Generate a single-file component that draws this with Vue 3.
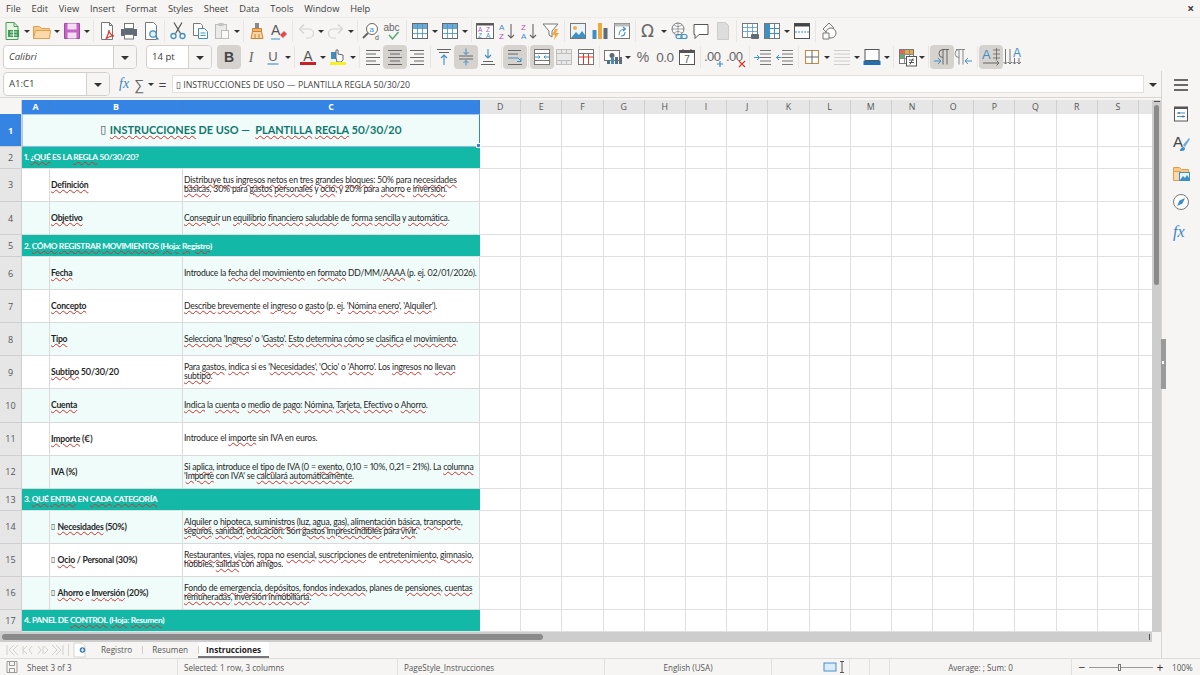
<template>
  <div class="app">
    <div class="menubar">
      <span v-for="m in menus" :key="m">{{ m }}</span>
      <span class="close-doc">×</span>
    </div>

    <div class="toolbar tb1">
      <template v-for="(it, i) in row1" :key="i">
        <i v-if="it === 's'" class="sep"></i>
        <i v-else-if="it === 'd'" class="drop"></i>
        <svg v-else class="btn" viewBox="0 0 22 22" v-html="icons[it]"></svg>
      </template>
    </div>

    <div class="toolbar tb2">
      <div class="combo font-box"><span class="combo-val italic">Calibri</span><b class="combo-arrow"></b></div>
      <div class="combo size-box"><span class="combo-val">14 pt</span><b class="combo-arrow"></b></div>
      <template v-for="(it, i) in row2" :key="i">
        <i v-if="it === 's'" class="sep"></i>
        <i v-else-if="it === 'd'" class="drop"></i>
        <svg v-else class="btn" :class="{ on: active.includes(it) }" viewBox="0 0 22 22" v-html="icons[it]"></svg>
      </template>
    </div>

    <div class="workspace">
      <div class="doc">
        <div class="formulabar">
          <div class="combo name-box"><span class="combo-val">A1:C1</span><b class="combo-arrow"></b></div>
          <span class="fx">fx</span>
          <span class="sigma">∑</span>
          <i class="drop small"></i>
          <span class="equal">=</span>
          <div class="formula-input">▯ INSTRUCCIONES DE USO — PLANTILLA REGLA 50/30/20</div>
          <i class="drop formula-drop"></i>
        </div>

        <div class="main">
          <div class="sheet-wrap">
            <div class="sheet-view">
              <div class="sheet">
                <div class="grid-row col-head">
                  <div class="corner"></div>
                  <div v-for="c in columns" :key="c" class="col-cell" :class="{ sel: selected.includes(c) }">{{ c }}</div>
                </div>

                <div v-for="row in rows" :key="row.n" class="grid-row" :style="{ height: row.h + 'px' }">
                  <div class="row-num" :class="{ sel: row.n === 1 }">{{ row.n }}</div>

                  <div v-if="row.type === 'title'" class="merged title-cell">
                    <span class="tofu">▯</span>
                    <template v-for="(p, k) in parse(row.text)" :key="k"><span :class="{ wavy: p.bad }">{{ p.t }}</span></template>
                    <span class="sel-handle"></span>
                  </div>
                  <div v-else-if="row.type === 'section'" class="merged section-cell">
                    <template v-for="(p, k) in parse(row.text)" :key="k"><span :class="{ wavy: p.bad }">{{ p.t }}</span></template>
                  </div>
                  <template v-else>
                    <div class="cell" :class="{ tint: row.tint }"></div>
                    <div class="cell label" :class="{ tint: row.tint }">
                      <span v-if="row.tofu" class="tofu small">▯ </span>
                      <template v-for="(p, k) in parse(row.label)" :key="k"><span :class="{ wavy: p.bad }">{{ p.t }}</span></template>
                    </div>
                    <div class="cell desc" :class="{ tint: row.tint }">
                      <div>
                        <template v-for="(p, k) in parse(row.text)" :key="k"><span :class="{ wavy: p.bad }">{{ p.t }}</span></template>
                      </div>
                    </div>
                  </template>

                  <div v-for="c in emptyCols" :key="c" class="empty"></div>
                </div>
              </div>
            </div>
            <div class="hscroll"><div class="hthumb"></div><i class="hmark"></i></div>
          </div>

          <div class="vscroll"><i class="vmark"></i><div class="vthumb"></div></div>
        </div>

        <div class="tabbar">
          <svg class="tab-nav" viewBox="0 0 60 14" width="60" height="14">
            <g fill="none" stroke="#d2d0cc" stroke-width="1">
              <path d="M2 2v10M9 2 4 7l5 5M13 2 8 7l5 5" />
              <path d="M22 3l-4 4 4 4M18 3v8M27 3l-3 4 3 4" />
              <path d="M33 3l3 4-3 4M38 3v8M39 3l4 4-4 4" />
              <path d="M47 2l5 5-5 5M51 2l5 5-5 5M58 2v10" />
            </g>
          </svg>
          <i class="tab-line"></i>
          <svg class="add-sheet" viewBox="0 0 16 16" width="16" height="16">
            <path d="M2 1h8l3 3v11H2z" fill="#fff" stroke="#d5d3cf" />
            <circle cx="10.5" cy="8" r="2.8" fill="#3a7fc4" />
            <path d="M9 8h3M10.5 6.5v3" stroke="#fff" stroke-width="1" />
          </svg>
          <span v-for="(t, i) in tabs" :key="t" class="tab" :class="{ current: i === 2 }">{{ t }}</span>
        </div>
      </div>

      <div class="sidebar">
        <svg v-for="s in sideIcons" :key="s" class="side-icon" viewBox="0 0 22 22" v-html="icons[s]"></svg>
        <div class="side-handle"><i></i></div>
      </div>
    </div>

    <div class="statusbar">
      <svg class="st-save" viewBox="0 0 14 14" width="14" height="14">
        <path d="M2 1.5h10v11H2zM4.5 1.5v4h5v-4M4.5 12.5v-4h5v4" fill="none" stroke="#9a9996" />
      </svg>
      <span class="st st-sheet">Sheet 3 of 3</span>
      <span class="st st-sel">Selected: 1 row, 3 columns</span>
      <span class="st st-page">PageStyle_Instrucciones</span>
      <span class="st st-lang">English (USA)</span>
      <span class="st st-mode">
        <svg viewBox="0 0 24 14" width="24" height="14">
          <rect x="1" y="3" width="12" height="8" fill="#d9ecf9" stroke="#4a90c8" />
          <path d="M17 1.5h4M19 1.5v11M17 12.5h4" fill="none" stroke="#555" />
        </svg>
      </span>
      <span class="st st-b1"></span>
      <span class="st st-b2"></span>
      <span class="st st-sum">Average: ; Sum: 0</span>
      <span class="st-zoom">
        <b class="zoom-btn">−</b>
        <span class="zoom-track"><i></i></span>
        <b class="zoom-btn">+</b>
      </span>
      <span class="st-pct">100%</span>
    </div>
  </div>
</template>

<script setup>
const menus = ['File', 'Edit', 'View', 'Insert', 'Format', 'Styles', 'Sheet', 'Data', 'Tools', 'Window', 'Help']
const tabs = ['Registro', 'Resumen', 'Instrucciones']

const columns = ['A', 'B', 'C', 'D', 'E', 'F', 'G', 'H', 'I', 'J', 'K', 'L', 'M', 'N', 'O', 'P', 'Q', 'R', 'S', '']
const selected = ['A', 'B', 'C']
const emptyCols = columns.slice(3)

// ~word~ marks what the spell checker underlines
const parse = (str) => str.split('~').map((t, i) => ({ t, bad: i % 2 === 1 }))

const rows = [
  { n: 1, h: 33, type: 'title', text: ' ~INSTRUCCIONES~ DE USO —  ~PLANTILLA~ ~REGLA~ 50/30/20' },
  { n: 2, h: 21.9, type: 'section', text: '1. ~¿QUÉ~ ES LA ~REGLA~ 50/30/20?' },
  { n: 3, h: 33.2, label: '~Definición~', text: '~Distribuye~ ~tus~ ~ingresos~ ~netos~ en ~tres~ ~grandes~ ~bloques~: 50% para ~necesidades~\n~básicas~, 30% para ~gastos~ ~personales~ y ~ocio~, y 20% para ~ahorro~ e ~inversión~.' },
  { n: 4, h: 33.1, tint: true, label: '~Objetivo~', text: '~Conseguir~ un ~equilibrio~ ~financiero~ ~saludable~ de ~forma~ ~sencilla~ y ~automática~.' },
  { n: 5, h: 21.9, type: 'section', text: '2. ~CÓMO~ ~REGISTRAR~ ~MOVIMIENTOS~ (~Hoja~: ~Registro~)' },
  { n: 6, h: 33.1, tint: true, label: '~Fecha~', text: 'Introduce la ~fecha~ ~del~ ~movimiento~ en ~formato~ DD/MM/~AAAA~ (p. ~ej~. 02/01/2026).' },
  { n: 7, h: 33.1, label: '~Concepto~', text: '~Describe~ ~brevemente~ el ~ingreso~ o ~gasto~ (p. ~ej~. \'~Nómina~ ~enero~\', \'~Alquiler~\').' },
  { n: 8, h: 33.1, tint: true, label: '~Tipo~', text: '~Selecciona~ \'~Ingreso~\' o \'~Gasto~\'. ~Esto~ ~determina~ ~cómo~ se ~clasifica~ el ~movimiento~.' },
  { n: 9, h: 33.1, label: '~Subtipo~ 50/30/20', text: 'Para ~gastos~, ~indica~ si es \'~Necesidades~\', \'~Ocio~\' o \'~Ahorro~\'. Los ~ingresos~ no ~llevan~\n~subtipo~.' },
  { n: 10, h: 33.1, tint: true, label: '~Cuenta~', text: '~Indica~ la ~cuenta~ o ~medio~ de ~pago~: ~Nómina~, ~Tarjeta~, ~Efectivo~ o ~Ahorro~.' },
  { n: 11, h: 33.1, label: '~Importe~ (€)', text: 'Introduce el ~importe~ sin IVA en euros.' },
  { n: 12, h: 33.1, tint: true, label: 'IVA (%)', text: 'Si ~aplica~, introduce el ~tipo~ de IVA (0 = ~exento~, 0,10 = 10%, 0,21 = 21%). La ~columna~\n\'~Importe~ con IVA\' se ~calculará~ ~automáticamente~.' },
  { n: 13, h: 21.9, type: 'section', text: '3. ~QUÉ~ ~ENTRA~ EN ~CADA~ ~CATEGORÍA~' },
  { n: 14, h: 33.1, tint: true, tofu: true, label: '~Necesidades~ (50%)', text: '~Alquiler~ o ~hipoteca~, ~suministros~ (~luz~, ~agua~, ~gas~), ~alimentación~ ~básica~, ~transporte~,\n~seguros~, ~sanidad~, ~educación~. Son ~gastos~ ~imprescindibles~ para ~vivir~.' },
  { n: 15, h: 33.1, tofu: true, label: '~Ocio~ / Personal (30%)', text: '~Restaurantes~, ~viajes~, ~ropa~ no ~esencial~, ~suscripciones~ de ~entretenimiento~, ~gimnasio~,\nhobbies, ~salidas~ con amigos.' },
  { n: 16, h: 33.1, tint: true, tofu: true, label: '~Ahorro~ e ~Inversión~ (20%)', text: '~Fondo~ de ~emergencia~, ~depósitos~, ~fondos~ ~indexados~, planes de ~pensiones~, ~cuentas~\n~remuneradas~, ~inversión~ ~inmobiliaria~.' },
  { n: 17, h: 21.9, type: 'section', text: '4. PANEL DE ~CONTROL~ (~Hoja~: ~Resumen~)' }
]

const row1 = ['new', 'd', 'open', 'd', 'save', 'd', 's', 'pdf', 'print', 'preview', 's', 'cut', 'copy', 'paste', 'd', 's', 'clone', 'clear', 's', 'undo', 'd', 'redo', 'd', 's', 'find', 'spell', 's', 'rows', 'd', 'cols', 'd', 's', 'sort', 'asc', 'desc', 'filter', 's', 'image', 'chart', 'pivot', 's', 'omega', 'd', 'link', 'comment', 'header', 's', 'freeze', 'split', 'd', 'window', 's', 'shapes']
const row2 = ['bold', 'italic', 'under', 'd', 's', 'color', 'd', 'high', 'd', 's', 'left', 'center', 'right', 's', 'top', 'mid', 'bottom', 's', 'wrap', 's', 'merge', 'unmerge', 'split2', 's', 'money', 'd', 'pct', 'num', 'date', 's', 'adddec', 'deldec', 's', 'indent', 'outdent', 's', 'border', 'd', 'bstyle', 'd', 'bcolor', 'd', 's', 'cond', 'd', 's', 'ltr', 'rtl', 's', 'horiz', 'vert']
const active = ['bold', 'center', 'mid', 'wrap', 'merge', 'ltr', 'horiz']
const sideIcons = ['menu', 'props', 'styles', 'gallery', 'nav', 'fxs']

const lines = (ys, x1, x2, c = '#666') => ys.map((y, i) => `<path d="M${x1} ${y}H${Array.isArray(x2) ? x2[i] : x2}" stroke="${c}" fill="none"/>`).join('')
const tableIcon = (c) => `<rect x="3.5" y="3.5" width="15" height="15" fill="#fff" stroke="#666"/><rect x="4" y="4" width="14" height="4" fill="${c}" opacity=".75"/><path d="M3.5 8.5h15M3.5 13.5h15M8.5 3.5v15M13.5 3.5v15" stroke="#3d8fc6" fill="none" opacity=".8"/>`
const textRows = [4.5, 8, 11.5, 15, 18.5]

const icons = {
  new: '<path d="M5 2.5h8l4 4v13H5z" fill="#e8f5e3" stroke="#4d9a5c"/><path d="M13 2.5v4h4" fill="none" stroke="#4d9a5c"/><rect x="7" y="10" width="11" height="7" fill="#3f9d58"/><path d="M9 12h7M9 15h7M12.5 10v7" stroke="#fff" stroke-width=".8"/>',
  open: '<path d="M2.5 6.5h6l2 2h8v10h-16z" fill="#f8c98a" stroke="#e0a050"/><path d="M2.5 18.5l2-8h15l-1 8z" fill="#fbd9a8" stroke="#e0a050"/>',
  save: '<path d="M3.5 3.5h15v15h-15z" fill="#c464c4" stroke="#a34ba3"/><rect x="6.5" y="3.5" width="9" height="6" fill="#f3ddf3"/><rect x="6.5" y="12.5" width="9" height="6" fill="#f3ddf3"/>',
  pdf: '<path d="M5.5 2.5h8l3 3v14h-11z" fill="#fff" stroke="#777"/><path d="M13.5 2.5v3h3" fill="none" stroke="#777"/><path d="M10 19c2-4 3-7 3-9 0 3 2 5 5 6-3 0-6 1-8 3z" fill="none" stroke="#d8362a" stroke-width="1.2"/>',
  print: '<rect x="6.5" y="3.5" width="9" height="5" fill="#fff" stroke="#777"/><path d="M3 9h16v7H3z" fill="#5f6b76"/><rect x="6.5" y="14.5" width="9" height="4.5" fill="#fff" stroke="#777"/>',
  preview: '<path d="M5.5 2.5h8l3 3v14h-11z" fill="#fff" stroke="#777"/><circle cx="13" cy="14" r="3.2" fill="#e4f1fa" stroke="#3d8fc6" stroke-width="1.2"/><path d="M15.5 16.5l3 3" stroke="#3d8fc6" stroke-width="1.5"/>',
  cut: '<path d="M7 2.5l6.5 11M15 2.5L8.5 13.5" stroke="#555" stroke-width="1.2" fill="none"/><circle cx="6.5" cy="16" r="2.5" fill="none" stroke="#3d8fc6" stroke-width="1.3"/><circle cx="15.5" cy="16" r="2.5" fill="none" stroke="#3d8fc6" stroke-width="1.3"/>',
  copy: '<path d="M4.5 3.5h7l2 2v10h-9z" fill="#fff" stroke="#777"/><path d="M9.5 8.5h6l3 3v7h-9z" fill="#fff" stroke="#3d8fc6"/><path d="M11.5 13h5M11.5 15.5h5" stroke="#3d8fc6"/>',
  paste: '<g opacity=".45"><rect x="4.5" y="4.5" width="11" height="14" fill="#ddd" stroke="#777"/><rect x="7.5" y="3" width="5" height="3" fill="#888"/><rect x="10.5" y="10.5" width="7" height="8" fill="#fff" stroke="#777"/></g>',
  clone: '<path d="M9 3h4v5H9z" fill="#888"/><path d="M6.5 8.5h9v3h-9z" fill="#f3b56a" stroke="#c78335"/><path d="M6.5 11.5h9l1.5 7H5z" fill="#fad6a4" stroke="#c78335"/><path d="M9 14v4M13 14v4" stroke="#c78335"/>',
  clear: '<text x="3" y="15" font-size="14" font-family="Liberation Sans" fill="#555">A</text><path d="M12 15l4-4 3 3-4 4z" fill="#e34a4a"/><path d="M3 19h9" stroke="#3d8fc6"/>',
  undo: '<g fill="none" stroke="#d4d3d0" stroke-width="1.2"><path d="M5 9h9a4 4 0 0 1 0 9h-3"/><path d="M9 4.5 4.5 9 9 13.5"/></g>',
  redo: '<g fill="none" stroke="#d4d3d0" stroke-width="1.2"><path d="M17 9H8a4 4 0 0 0 0 9h3"/><path d="M13 4.5 17.5 9 13 13.5"/></g>',
  find: '<circle cx="12" cy="9" r="5.5" fill="#fff" stroke="#666"/><path d="M8 13l-5 5" stroke="#666" stroke-width="2"/><text x="9.6" y="11.5" font-size="8" font-family="Liberation Sans" fill="#3d8fc6">a</text><text x="15" y="20" font-size="7" font-family="Liberation Sans" fill="#555">d</text>',
  spell: '<text x="1.5" y="11" font-size="10" font-family="Liberation Sans" fill="#666">abc</text><path d="M7 15l3.5 4 6-7" fill="none" stroke="#4aa96c" stroke-width="1.4"/>',
  rows: tableIcon('#3d8fc6'),
  cols: tableIcon('#3d8fc6'),
  sort: '<rect x="2.5" y="3.5" width="17" height="15" fill="#fff" stroke="#666"/><rect x="3" y="3.5" width="16" height="2" fill="#555"/><text x="4" y="11.5" font-size="6.5" font-family="Liberation Sans" fill="#b04fc0">A</text><text x="12" y="11.5" font-size="6.5" font-family="Liberation Sans" fill="#b04fc0">Z</text><text x="4" y="18" font-size="6.5" font-family="Liberation Sans" fill="#3d8fc6">Z</text><text x="12" y="18" font-size="6.5" font-family="Liberation Sans" fill="#3d8fc6">A</text>',
  asc: '<text x="3" y="10" font-size="8" font-family="Liberation Sans" fill="#3d8fc6">A</text><text x="3" y="19" font-size="8" font-family="Liberation Sans" fill="#b04fc0">Z</text><path d="M15 4v14M12 15l3 3 3-3" fill="none" stroke="#666" stroke-width="1.1"/>',
  desc: '<text x="3" y="10" font-size="8" font-family="Liberation Sans" fill="#b04fc0">Z</text><text x="3" y="19" font-size="8" font-family="Liberation Sans" fill="#3d8fc6">A</text><path d="M15 4v14M12 15l3 3 3-3" fill="none" stroke="#666" stroke-width="1.1"/>',
  filter: '<path d="M3 4h15l-6 7v6l-3-2v-4z" fill="#fff" stroke="#777"/><path d="M15 9l-3 6h3l-1 5 5-7h-3l2-4z" fill="#f2a93b"/>',
  image: '<rect x="3.5" y="3.5" width="15" height="15" fill="#eaf4fb" stroke="#777"/><circle cx="8" cy="8" r="2" fill="#f2b04a"/><path d="M4 18l5-6 3 3 3-4 3 4v3z" fill="#3d8fc6"/>',
  chart: '<rect x="3.5" y="10" width="4" height="9" fill="#3d8fc6"/><rect x="9" y="3" width="4" height="16" fill="#f2a93b"/><rect x="14.5" y="8" width="4" height="11" fill="#5f6b76"/>',
  pivot: '<rect x="3.5" y="3.5" width="15" height="15" fill="#fff" stroke="#777"/><rect x="3.5" y="3.5" width="15" height="3" fill="#bbb"/><path d="M8 15c0-4 3-6 6-6M12 7l2.5 2-2.5 2M14 12c0 3-2 4-4 4" fill="none" stroke="#3d8fc6" stroke-width="1.1"/>',
  omega: '<text x="3" y="17" font-size="17" font-family="DejaVu Sans" fill="#666">Ω</text>',
  link: '<circle cx="10" cy="9" r="6" fill="#fff" stroke="#777"/><path d="M4 9h12M10 3v12M6 5c3 2 5 2 8 0M6 13c3-2 5-2 8 0" fill="none" stroke="#777" stroke-width=".7"/><rect x="8" y="14.5" width="6" height="4" rx="2" fill="none" stroke="#3d8fc6" stroke-width="1.2"/><rect x="13" y="14.5" width="6" height="4" rx="2" fill="none" stroke="#3d8fc6" stroke-width="1.2"/>',
  comment: '<path d="M4 4.5h14v10H9l-4 4v-4H4z" fill="#fff" stroke="#555"/>',
  header: '<path d="M5.5 2.5h8l3 3v14h-11z" fill="#ddd" stroke="#ccc"/>',
  freeze: '<rect x="3.5" y="3.5" width="15" height="14" fill="#fff" stroke="#777"/><path d="M3.5 7.5h15M3.5 11.5h15M8.5 3.5v14M13.5 3.5v14" stroke="#3d8fc6" fill="none" opacity=".7"/><rect x="12" y="14" width="8" height="5" rx="1" fill="#5f6b76"/>',
  split: '<rect x="3.5" y="3.5" width="15" height="15" fill="#fff" stroke="#777"/><rect x="4" y="4" width="5" height="14" fill="#3d8fc6"/><path d="M3.5 8.5h15M3.5 13.5h15M13.5 3.5v15" stroke="#3d8fc6" fill="none"/>',
  window: '<rect x="3.5" y="3.5" width="15" height="15" fill="#fff" stroke="#555"/><rect x="3.5" y="3.5" width="15" height="3" fill="#444"/><path d="M4 12h14" stroke="#3d8fc6" stroke-dasharray="2 1"/>',
  shapes: '<path d="M5 9l6-6 5 5-6 6z" fill="none" stroke="#777"/><circle cx="13" cy="13" r="5" fill="#fff" stroke="#777"/><path d="M5 13h6v6H5z" fill="#fff" stroke="#777"/>',

  bold: '<text x="11" y="16" text-anchor="middle" font-size="14" font-weight="700" font-family="Liberation Sans" fill="#444">B</text>',
  italic: '<text x="11" y="16" text-anchor="middle" font-size="14" font-style="italic" font-family="Liberation Serif" fill="#666">I</text>',
  under: '<text x="11" y="15" text-anchor="middle" font-size="13" font-family="Liberation Sans" fill="#666">U</text><path d="M5.5 18h11" stroke="#6aa9d8" stroke-width="1.5"/>',
  color: '<text x="11" y="14.5" text-anchor="middle" font-size="14" font-family="Liberation Sans" fill="#555">A</text><rect x="3" y="16" width="16" height="3" fill="#c9212a"/>',
  high: '<path d="M4 6h7v7H4z" fill="#3d8fc6"/><path d="M9 12V4h2v4l5 1v5l-2 2h-4z" fill="#fff" stroke="#666"/><rect x="3" y="16" width="16" height="3" fill="#f7f029"/>',
  left: lines(textRows, 4, [18, 14, 18, 14, 18]),
  center: lines(textRows, 4, 18).replace('M4 8H18', 'M6 8H16').replace('M4 15H18', 'M6 15H16'),
  right: lines(textRows, 4, 18).replace('M4 8H18', 'M8 8H18').replace('M4 15H18', 'M8 15H18'),
  top: '<path d="M4 3.5h14M6 6.5h10" stroke="#666" fill="none"/><path d="M11 19V9M8 12l3-3 3 3" stroke="#3d8fc6" fill="none" stroke-width="1.1"/>',
  mid: '<path d="M4 10h14M4 13h14" stroke="#666" fill="none"/><path d="M11 2.5v6M8.5 6l2.5 2.5L13.5 6M11 19.5v-5M8.5 17l2.5-2.5 2.5 2.5" stroke="#3d8fc6" fill="none"/>',
  bottom: '<path d="M11 3v9M8 9l3 3 3-3" stroke="#3d8fc6" fill="none" stroke-width="1.1"/><path d="M6 15.5h10M4 18.5h14" stroke="#666" fill="none"/>',
  wrap: lines([4.5, 8, 18.5], 4, [17, 14, 18]) + '<path d="M4 12h10l3 3M13 15.5h4V12" stroke="#3d8fc6" fill="none"/>',
  merge: '<rect x="3.5" y="3.5" width="15" height="15" fill="#fff" stroke="#777"/><path d="M3.5 7.5h15M3.5 14.5h15" stroke="#777" fill="none"/><path d="M4 11h5l-1.5-1.5M18 11h-5l1.5-1.5M9 11l-1.5 1.5M13 11l1.5 1.5" stroke="#3d8fc6" fill="none"/>',
  unmerge: '<g opacity=".5"><rect x="3.5" y="3.5" width="15" height="15" fill="#ddd" stroke="#888"/><path d="M3.5 7.5h15M3.5 14.5h15M8.5 3.5v4M13.5 3.5v4M8.5 14.5v4M13.5 14.5v4" stroke="#888" fill="none"/></g>',
  split2: '<rect x="3.5" y="3.5" width="15" height="15" fill="#fff" stroke="#777"/><path d="M3.5 7.5h15" stroke="#777"/><path d="M8.5 7.5v11M13.5 7.5v11M3.5 11h15" stroke="#d8362a" fill="none"/>',
  money: '<rect x="2.5" y="4.5" width="15" height="10" fill="#fff" stroke="#777"/><circle cx="10" cy="9.5" r="2.5" fill="#5f6b76"/><rect x="9" y="12" width="3" height="6" fill="#3d8fc6"/><rect x="13" y="11" width="3" height="7" fill="#5f6b76"/><rect x="17" y="11" width="3" height="7" fill="#5f6b76"/><rect x="5" y="14" width="3" height="4" fill="#5f6b76"/>',
  pct: '<text x="11" y="16" text-anchor="middle" font-size="14" font-family="Liberation Sans" fill="#666">%</text>',
  num: '<text x="11" y="16" text-anchor="middle" font-size="13.5" font-family="Liberation Sans" fill="#666" letter-spacing="-.5">0.0</text>',
  date: '<rect x="3.5" y="4.5" width="15" height="14" fill="#fff" stroke="#555"/><rect x="3.5" y="4.5" width="15" height="2.5" fill="#555"/><path d="M7 3v3M15 3v3" stroke="#555"/><text x="11" y="17" text-anchor="middle" font-size="10" font-family="Liberation Sans" fill="#555">7</text>',
  adddec: '<text x="1" y="15" font-size="13" font-family="Liberation Sans" fill="#666" letter-spacing="-.5">.00</text><path d="M14 18h6M17 15v6" stroke="#3d8fc6" stroke-width="1.2"/>',
  deldec: '<text x="1" y="15" font-size="13" font-family="Liberation Sans" fill="#666" letter-spacing="-.5">.00</text><path d="M14 15l6 6M20 15l-6 6" stroke="#d8362a" stroke-width="1.2"/>',
  indent: lines(textRows, 8, 19, '#777') + '<path d="M2 11.5h5M5 9l2.5 2.5L5 14" stroke="#3d8fc6" fill="none"/>',
  outdent: lines(textRows, 8, 19, '#777') + '<path d="M7.5 11.5h-5M5 9l-2.5 2.5L5 14" stroke="#3d8fc6" fill="none"/>',
  border: '<rect x="4.5" y="4.5" width="13" height="13" fill="#fff" stroke="#c9883f"/><path d="M11 4.5v13M4.5 11h13" stroke="#666" fill="none"/>',
  bstyle: lines(textRows, 3, 19, '#cfcecb'),
  bcolor: '<rect x="4" y="3.5" width="14" height="11" fill="#fff" stroke="#555"/><rect x="2.5" y="15" width="17" height="4" fill="#1f6fb5"/>',
  cond: '<rect x="3.5" y="3.5" width="14" height="14" fill="#fff" stroke="#777"/><rect x="4" y="4" width="4.5" height="4" fill="#e06a5a"/><rect x="4" y="8.5" width="4.5" height="4" fill="#5bb36a"/><rect x="9" y="4" width="8" height="4" fill="#e0a94a"/><path d="M3.5 8.5h14M3.5 12.5h14M8.5 3.5v14M13.5 3.5v14" stroke="#888" fill="none"/><rect x="10.5" y="10.5" width="10" height="9.5" fill="#fff" stroke="#555"/><path d="M13 14h5M13 16.5h5M17 12.5l-3 6" stroke="#555" fill="none"/>',
  ltr: '<path d="M11 3.5h7M12 3.5v15M16 3.5v15M12 3.5a4 4 0 0 0 0 8" fill="none" stroke="#666"/><path d="M3 15h7M7 12l3 3-3 3" stroke="#3d8fc6" fill="none"/>',
  rtl: '<path d="M3 3.5h9M6 3.5v15M10 3.5v15M6 3.5a4 4 0 0 0 0 8" fill="none" stroke="#888"/><path d="M19 15h-7M15 12l-3 3 3 3" stroke="#3d8fc6" fill="none"/>',
  horiz: '<text x="2" y="13" font-size="13" font-family="Liberation Sans" fill="#3d8fc6">A</text><path d="M13 4h7M13 8h7M13 12h7M16.5 2v12" stroke="#666" fill="none" stroke-width=".8"/><path d="M3 17h16M16.5 14.5 19 17l-2.5 2.5" stroke="#666" fill="none"/>',
  vert: '<text x="11" y="11" font-size="12" font-family="Liberation Sans" fill="#3d8fc6">A</text><path d="M3.5 3v15M1.5 16l2 2 2-2M8 3v15M6 16l2 2 2-2M12.5 12v6M10.5 16l2 2 2-2M17 12v6M15 16l2 2 2-2" stroke="#666" fill="none" stroke-width=".9"/>',

  menu: '<path d="M4 6h14M4 11h14M4 16h14" stroke="#3b3b3b" stroke-width="1.5"/>',
  props: '<rect x="4.5" y="4" width="13" height="14" fill="#fff" stroke="#555"/><rect x="4.5" y="4" width="13" height="2" fill="#555"/><path d="M7 10h8M7 13.5h8" stroke="#3d8fc6"/><path d="M9 9v2M13 12.5v2" stroke="#555"/>',
  styles: '<text x="3" y="15" font-size="15" font-family="Liberation Sans" fill="#444">A</text><path d="M13 13l6-7 1 1-5 8z" fill="#6aa9d8"/><path d="M10 19c0-3 2-4 4-4l1 1c0 3-2 3-5 3z" fill="#3d8fc6"/>',
  gallery: '<path d="M3.5 5.5h6l2 2h7v4h-15z" fill="#f8c98a" stroke="#e0a050"/><path d="M3.5 9.5v9h7v-9z" fill="#fbd9a8" stroke="#e0a050"/><rect x="9.5" y="10.5" width="10" height="8" fill="#eaf4fb" stroke="#3d8fc6"/><path d="M10 18l3-4 2 2 2-3 2 3v2z" fill="#3d8fc6"/>',
  nav: '<circle cx="11" cy="11" r="7.5" fill="#fff" stroke="#777"/><path d="M15 7l-2.5 5.5L7 15l2.5-5.5z" fill="#3d8fc6"/>',
  fxs: '<text x="3" y="17" font-size="16" font-style="italic" font-family="Liberation Serif" fill="#3a85c4">fx</text>'
}
</script>

<style scoped>
.app {
  width: 1200px;
  height: 675px;
  background: #f6f5f4;
  display: flex;
  flex-direction: column;
  overflow: hidden;
  font-family: "Open Sans", "Noto Sans", sans-serif;
  color: #3d3d3d;
  font-size: 9.5px;
}

.menubar {
  height: 17px;
  display: flex;
  align-items: center;
  gap: 10.8px;
  padding: 0 6px;
  font-size: 9.3px;
  flex: none;
}

.close-doc {
  margin-left: auto;
  font-size: 12px;
  font-weight: 700;
}

.toolbar {
  display: flex;
  align-items: center;
  flex: none;
}

.tb1 {
  height: 26px;
  padding-left: 1px;
  border-top: 1px solid #ecebe9;
  box-sizing: border-box;
}

.tb2 {
  height: 28px;
  padding-left: 3px;
}

.btn {
  width: 22px;
  height: 22px;
  flex: none;
  border-radius: 3px;
  overflow: visible;
}

.btn.on {
  background: #d6d3cf;
  box-shadow: 0 0 0 1px #d6d3cf;
}

.sep {
  width: 5px;
  height: 22px;
  flex: none;
  position: relative;
}

.sep::after {
  content: "";
  position: absolute;
  left: 2px;
  top: 0;
  bottom: 0;
  width: 1px;
  background: #e8e6e3;
}

.drop {
  width: 8px;
  height: 22px;
  flex: none;
  position: relative;
}

.drop::after {
  content: "";
  position: absolute;
  left: 1px;
  top: 10px;
  border-left: 3px solid transparent;
  border-right: 3px solid transparent;
  border-top: 3px solid #333;
}

.combo {
  display: flex;
  align-items: stretch;
  background: #fff;
  border: 1px solid #d3d0cc;
  border-radius: 4px;
  box-sizing: border-box;
  height: 24px;
  flex: none;
  overflow: hidden;
}

.combo-val {
  flex: 1;
  padding-left: 5px;
  line-height: 22px;
  font-size: 9.6px;
}

.italic {
  font-style: italic;
}

.combo-arrow {
  width: 22px;
  background: #f6f5f4;
  border-left: 1px solid #d3d0cc;
  position: relative;
}

.combo-arrow::after {
  content: "";
  position: absolute;
  left: 7px;
  top: 10px;
  border-left: 4px solid transparent;
  border-right: 4px solid transparent;
  border-top: 4px solid #333;
}

.font-box {
  width: 134px;
}

.size-box {
  width: 66px;
  margin-left: 9px;
  margin-right: 6px;
}

.workspace {
  flex: 1;
  min-height: 0;
  display: flex;
}

.doc {
  width: 1161px;
  flex: none;
  display: flex;
  flex-direction: column;
}

.formulabar {
  height: 27px;
  display: flex;
  align-items: center;
  padding-left: 3px;
  padding-right: 2px;
  flex: none;
  border-bottom: 1px solid #d8d6d2;
  box-sizing: border-box;
}

.name-box {
  width: 107px;
}

.fx {
  margin-left: 9px;
  width: 14px;
  color: #3a85c4;
  font-family: "Liberation Serif", serif;
  font-style: italic;
  font-size: 14px;
}

.sigma {
  margin-left: 2px;
  width: 11px;
  font-size: 14px;
  color: #666;
}

.drop.small {
  margin-left: 1px;
}

.equal {
  width: 15px;
  font-size: 14px;
  text-align: center;
  color: #444;
}

.formula-input {
  flex: 1;
  margin-left: 2px;
  height: 18px;
  line-height: 18px;
  background: #fff;
  border: 1px solid #e2e0dd;
  box-sizing: border-box;
  padding-left: 3px;
  font-size: 8.8px;
  color: #444;
}

.formula-drop {
  margin-left: 3px;
  width: 12px;
}

.formula-drop::after {
  left: 2px;
  border-left-width: 4px;
  border-right-width: 4px;
  border-top-width: 4px;
}

.main {
  flex: 1;
  display: flex;
  min-height: 0;
}

.sheet-wrap {
  width: 1152px;
  flex: none;
  display: flex;
  flex-direction: column;
  padding-top: 2px;
  box-sizing: border-box;
}

.sheet-view {
  flex: 1;
  min-height: 0;
  overflow: hidden;
  background: #fff;
}

.sheet {
  width: 1200px;
}

.grid-row {
  display: grid;
  grid-template-columns: 22px 28px 133px 297px repeat(17, 41.2px);
  box-sizing: border-box;
}

.col-head {
  height: 14px;
}

.corner {
  background: #f6f5f4;
  border-right: 1px solid #cfcfcf;
}

.col-cell {
  background: #e6e6e6;
  border-right: 1px solid #cfcfcf;
  text-align: center;
  font-size: 8.8px;
  line-height: 14px;
  color: #555;
}

.col-cell.sel {
  background: #3584e4;
  color: #fff;
  font-weight: 700;
  border-right-color: #3a7fd6;
}

.row-num {
  background: #e6e6e6;
  border-bottom: 1px solid #cfcfcf;
  border-right: 1px solid #cfcfcf;
  display: flex;
  align-items: center;
  justify-content: center;
  font-size: 9px;
  color: #555;
  box-sizing: border-box;
}

.row-num.sel {
  background: #3584e4;
  color: #fff;
  font-weight: 700;
}

.merged {
  grid-column: span 3;
  display: flex;
  align-items: center;
  box-sizing: border-box;
  position: relative;
  font-family: Lato, "Open Sans", sans-serif;
  font-variant-numeric: proportional-nums;
  white-space: pre;
}

.title-cell {
  background: #effcfa;
  border: 1px solid #a9c9ee;
  border-right-color: #3584e4;
  border-bottom-color: #8fb8e8;
  justify-content: center;
  color: #0f766e;
  font-size: 10.9px;
  font-weight: 700;
  padding-bottom: 3px;
}

.section-cell {
  background: #14b8a6;
  color: #fff;
  font-size: 8.4px;
  letter-spacing: -0.36px;
  font-weight: 700;
  padding-left: 2px;
  border-bottom: 1px solid #d5e6e3;
}

.sel-handle {
  position: absolute;
  right: -2px;
  bottom: -2px;
  width: 3px;
  height: 3px;
  background: #3584e4;
  border: 1px solid #fff;
  z-index: 2;
}

.tofu {
  font-family: "DejaVu Sans", sans-serif;
  font-weight: 400;
  font-size: 11px;
  margin-right: 1px;
  color: #444;
}

.tofu.small {
  font-size: 8px;
  margin-right: 0;
}

.cell {
  background: #fff;
  border-right: 1px solid #dadada;
  border-bottom: 1px solid #dadada;
  box-sizing: border-box;
  display: flex;
  align-items: center;
  font-family: Lato, "Open Sans", sans-serif;
  font-variant-numeric: proportional-nums;
  color: #1f1f1f;
  overflow: hidden;
}

.cell.tint {
  background: #effcfa;
}

.label {
  font-size: 8.6px;
  font-weight: 700;
  letter-spacing: -0.2px;
  padding-left: 1px;
  white-space: pre;
}

.desc {
  font-size: 8.6px;
  letter-spacing: -0.22px;
  line-height: 9px;
  padding-left: 1px;
  white-space: pre;
}

.empty {
  background: #fff;
  border-right: 1px solid #dfdfdf;
  border-bottom: 1px solid #dfdfdf;
  box-sizing: border-box;
}

.wavy {
  text-decoration: underline wavy #d0312d 0.6px;
  text-underline-offset: 0.5px;
}

.hscroll {
  height: 10px;
  background: #cdcdcd;
  flex: none;
  position: relative;
  display: flex;
  align-items: center;
  padding-left: 2px;
}

.hthumb {
  width: 541px;
  height: 6px;
  background: #8a8a8a;
  border-radius: 3px;
}

.hmark {
  position: absolute;
  right: 2px;
  top: 2px;
  width: 1px;
  height: 6px;
  background: #555;
}

.vscroll {
  width: 9px;
  flex: none;
  background: #cdcdcd;
  margin-top: 2px;
  margin-bottom: 10px;
  position: relative;
  padding-top: 5px;
  box-sizing: border-box;
}

.vmark {
  position: absolute;
  left: 2px;
  top: 1px;
  width: 6px;
  height: 1px;
  background: #555;
}

.vthumb {
  width: 5px;
  height: 180px;
  margin-left: 2px;
  background: #8a8a8a;
  border-radius: 3px;
}

.sidebar {
  flex: 1;
  position: relative;
  display: flex;
  flex-direction: column;
  align-items: center;
  border-left: 1px solid #d8d6d2;
  padding-top: 3px;
  gap: 7.2px;
}

.side-icon {
  width: 22px;
  height: 22px;
  flex: none;
}

.side-handle {
  position: absolute;
  left: -1px;
  top: 268px;
  width: 5px;
  height: 50px;
  background: #9a9a9a;
}

.side-handle i {
  position: absolute;
  left: 1px;
  top: 22px;
  width: 2px;
  height: 3px;
  background: #fff;
}

.tabbar {
  height: 16px;
  display: flex;
  align-items: center;
  flex: none;
  padding-left: 5px;
  font-size: 8.2px;
}

.tab-nav {
  flex: none;
}

.tab-line {
  width: 1px;
  height: 12px;
  background: #d8d6d2;
  margin-left: 3px;
  flex: none;
}

.add-sheet {
  margin-left: 3px;
  flex: none;
}

.tab {
  padding: 0 10px;
  height: 16px;
  line-height: 15px;
  position: relative;
  color: #555;
}

.tab:first-of-type {
  margin-left: 3px;
}

.tab + .tab::before {
  content: "";
  position: absolute;
  left: 0;
  top: 4px;
  height: 8px;
  width: 1px;
  background: #d0cecb;
}

.tab.current {
  background: #fff;
  color: #222;
  font-weight: 700;
  border-bottom: 2px solid #77767b;
  box-sizing: border-box;
  padding: 0 8px;
}

.statusbar {
  height: 17px;
  display: flex;
  align-items: center;
  flex: none;
  font-size: 8.1px;
  color: #555;
  padding-left: 5px;
  border-top: 1px solid #dedcd9;
  box-sizing: border-box;
}

.st-save {
  flex: none;
  margin-right: 8px;
}

.st {
  display: flex;
  align-items: center;
  height: 100%;
  box-sizing: border-box;
  border-right: 1px solid #e2e0dd;
  flex: none;
}

.st-sheet { width: 151px; }
.st-sel { width: 220px; padding-left: 6px; }
.st-page { width: 207px; padding-left: 6px; }
.st-lang { width: 167px; justify-content: center; }
.st-mode { width: 78px; justify-content: flex-end; padding-right: 2px; }
.st-b1 { width: 20px; }
.st-b2 { width: 20px; }
.st-sum { width: 182px; justify-content: center; }

.st-zoom {
  flex: none;
  display: flex;
  align-items: center;
  margin-left: 5px;
  width: 92px;
}

.zoom-btn {
  width: 10px;
  text-align: center;
  font-size: 12px;
  font-weight: 400;
  color: #333;
}

.zoom-track {
  width: 64px;
  height: 1px;
  margin: 0 2px;
  background: #999;
  position: relative;
}

.zoom-track i {
  position: absolute;
  left: 29px;
  top: -3px;
  width: 3px;
  height: 7px;
  border: 1px solid #777;
  background: #fff;
  box-sizing: border-box;
}

.st-pct {
  margin-left: 3px;
}
</style>

<style>
html, body {
  margin: 0;
  background: #f6f5f4;
}
</style>
